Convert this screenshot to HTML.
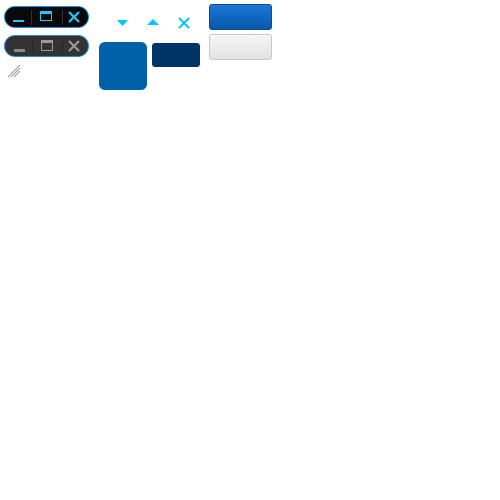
<!DOCTYPE html><html><head><style>
body{margin:0;width:500px;height:500px;background:#fff;position:relative;overflow:hidden}
.a{position:absolute}
.bar{position:absolute;left:4px;width:85px;height:22px;border-radius:11px;box-sizing:border-box}
</style></head><body>
<div class="bar" style="top:6px;background:#0a0a0a;border:1px solid #1a8fe0"></div>
<div class="a" style="left:31px;top:10px;width:1px;height:15px;background:#333"></div>
<div class="a" style="left:62px;top:10px;width:1px;height:15px;background:#333"></div>
<div class="a" style="left:13px;top:20px;width:11px;height:2px;background:#1ec8ff"></div>
<div class="a" style="left:40px;top:11px;width:12px;height:10px;border:1px solid #1ec8ff;border-top-width:3px;box-sizing:border-box"></div>
<svg class="a" style="left:68px;top:11px" width="12" height="12"><path d="M1 1L11 11M11 1L1 11" stroke="#1ec8ff" stroke-width="2.2"/></svg>

<div class="bar" style="top:35px;background:#333;border:1px solid #1a8fe0"></div>
<div class="a" style="left:32px;top:41px;width:1px;height:10px;background:#222"></div>
<div class="a" style="left:62px;top:41px;width:1px;height:10px;background:#222"></div>
<div class="a" style="left:14px;top:49px;width:11px;height:3px;background:#888"></div>
<div class="a" style="left:41px;top:40px;width:12px;height:11px;border:1px solid #999;border-top-width:3px;box-sizing:border-box"></div>
<svg class="a" style="left:68px;top:40px" width="12" height="12"><path d="M1 1L11 11M11 1L1 11" stroke="#999" stroke-width="2.2"/></svg>

<svg class="a" style="left:7px;top:64px" width="14" height="14"><path d="M1 13L13 1M4 13L13 4M7 13L13 7" stroke="#999" stroke-width="1"/></svg>

<svg class="a" style="left:116px;top:19px" width="14" height="8"><path d="M1 1H12L6.5 7Z" fill="#00c8ff"/></svg>
<svg class="a" style="left:146px;top:18px" width="14" height="8"><path d="M1 7H13L7 1Z" fill="#00c8ff"/></svg>
<svg class="a" style="left:178px;top:17px" width="12" height="12"><path d="M1 1L11 11M11 1L1 11" stroke="#00c8ff" stroke-width="2"/></svg>

<div class="a" style="left:99px;top:42px;width:48px;height:48px;border-radius:6px;background:#0060a8"></div>
<div class="a" style="left:152px;top:43px;width:48px;height:24px;border-radius:3px;background:#003366"></div>
<div class="a" style="left:209px;top:4px;width:63px;height:26px;border-radius:3px;background:linear-gradient(#1a78d8,#0858aa);border:1px solid #0a4c8c;box-sizing:border-box"></div>
<div class="a" style="left:209px;top:34px;width:63px;height:26px;border-radius:3px;background:linear-gradient(#f6f6f6,#e2e2e2);border:1px solid #c8c8c8;box-sizing:border-box"></div>
</body></html>
